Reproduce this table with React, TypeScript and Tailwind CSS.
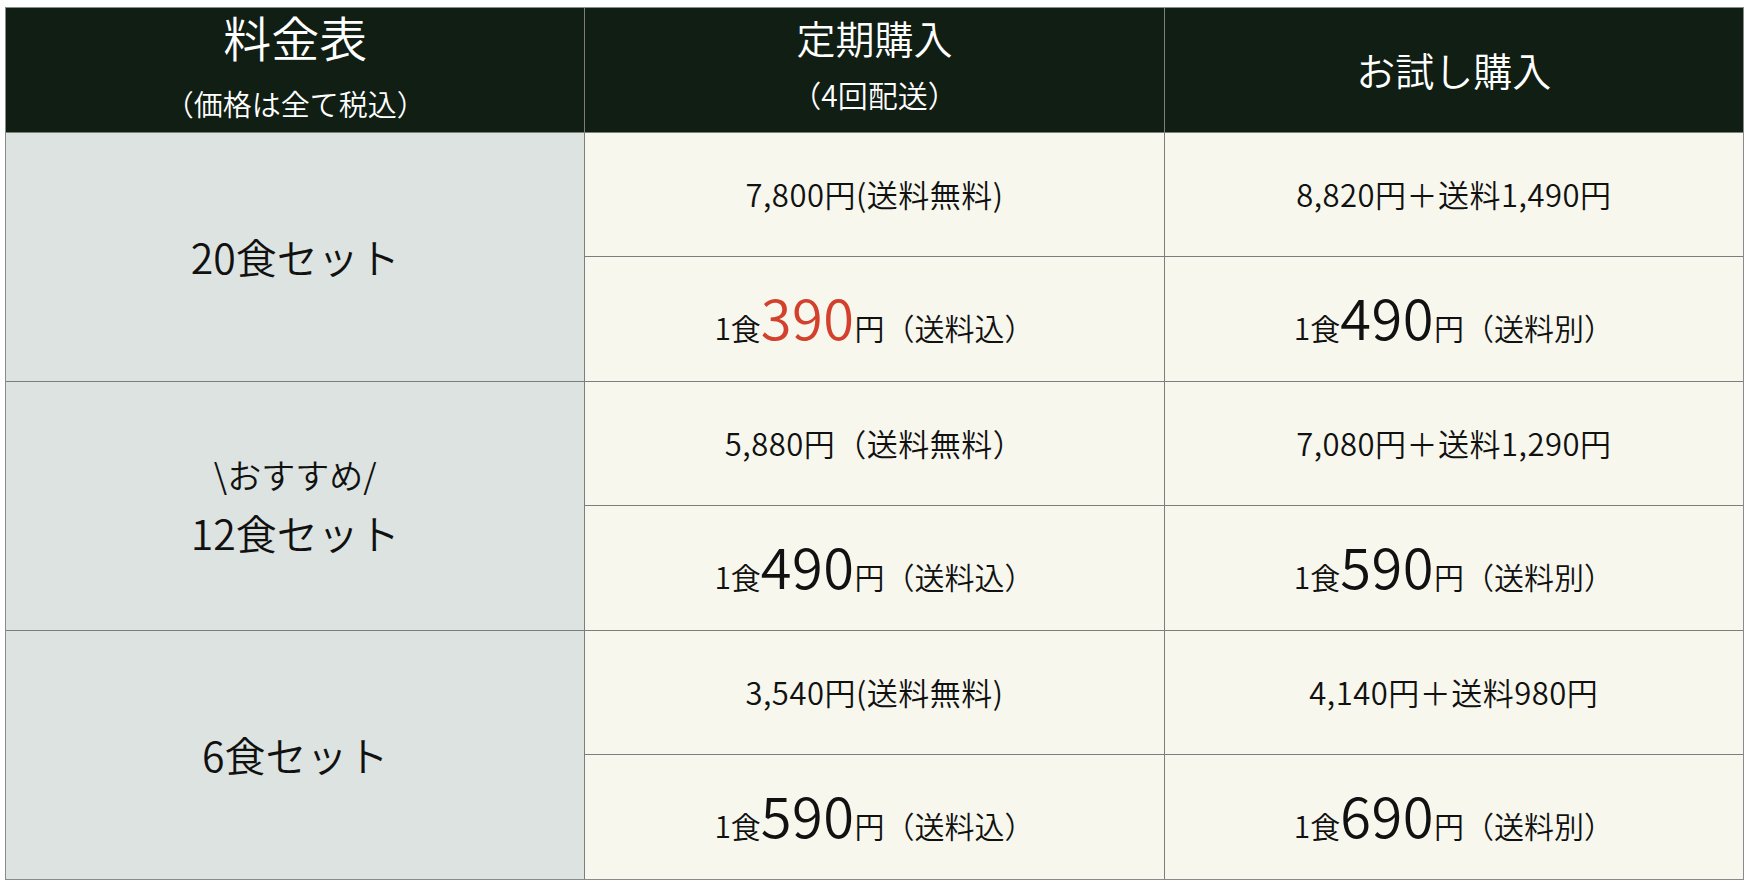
const rows = [
  {
    label: ["20食セット"],
    sub: "7,800円(送料無料)",
    subTrial: "8,820円＋送料1,490円",
    per: "390",
    perTrial: "490",
    accent: true,
  },
  {
    label: ["\\おすすめ/", "12食セット"],
    sub: "5,880円（送料無料）",
    subTrial: "7,080円＋送料1,290円",
    per: "490",
    perTrial: "590",
    accent: false,
  },
  {
    label: ["6食セット"],
    sub: "3,540円(送料無料)",
    subTrial: "4,140円＋送料980円",
    per: "590",
    perTrial: "690",
    accent: false,
  },
];

function PerMeal({ price, note, accent }: { price: string; note: string; accent?: boolean }) {
  return (
    <div className="flex items-baseline justify-center text-[30px] text-[#111]">
      <span>1食</span>
      <span className={`text-[56px] leading-none tracking-[0.5px] ${accent ? "text-[#d3402b]" : "text-[#111]"}`}>{price}</span>
      <span>円</span>
      <span>{note}</span>
    </div>
  );
}

export default function App() {
  return (
    <div
      className="w-[1751px] h-[888px] bg-white pl-[5px] pt-[7px] font-[350]"
      style={{ fontFamily: '"Noto Sans CJK JP", "Noto Sans", sans-serif' }}
    >
      <div className="grid w-[1739px] h-[873px] grid-cols-3 grid-rows-[repeat(7,1fr)] gap-px border border-[#8a8a8a] bg-[#7d7d7d]">
        {/* header */}
        <div className="flex flex-col items-center justify-center bg-[#111e14] text-white">
          <div className="text-[48px] leading-none -mt-[10px]">料金表</div>
          <div className="text-[29px] leading-none mt-[29px]">（価格は全て税込）</div>
        </div>
        <div className="flex flex-col items-center justify-center bg-[#111e14] text-white">
          <div className="text-[39px] leading-none -mt-[12px]">定期購入</div>
          <div className="text-[30px] leading-none mt-[22px]">（4回配送）</div>
        </div>
        <div className="flex items-center justify-center bg-[#111e14] text-white">
          <div className="text-[39px] leading-none">お試し購入</div>
        </div>

        {rows.map((r, i) => (
          <div key={i} className="contents">
            <div className="row-span-2 flex flex-col items-center justify-center bg-[#dde3e0] text-[#111]">
              {r.label.length > 1 && <div className="text-[34px] leading-none mb-[20px]">{r.label[0]}</div>}
              <div className="text-[41px] leading-none">{r.label[r.label.length - 1]}</div>
            </div>
            <div className="flex items-center justify-center bg-[#f7f7ed] text-[31px] tracking-[0.5px] text-[#111]">{r.sub}</div>
            <div className="flex items-center justify-center bg-[#f7f7ed] text-[31px] tracking-[0.5px] text-[#111]">{r.subTrial}</div>
            <div className="flex items-center justify-center bg-[#f7f7ed]">
              <PerMeal price={r.per} note="（送料込）" accent={r.accent} />
            </div>
            <div className="flex items-center justify-center bg-[#f7f7ed]">
              <PerMeal price={r.perTrial} note="（送料別）" />
            </div>
          </div>
        ))}
      </div>
    </div>
  );
}
